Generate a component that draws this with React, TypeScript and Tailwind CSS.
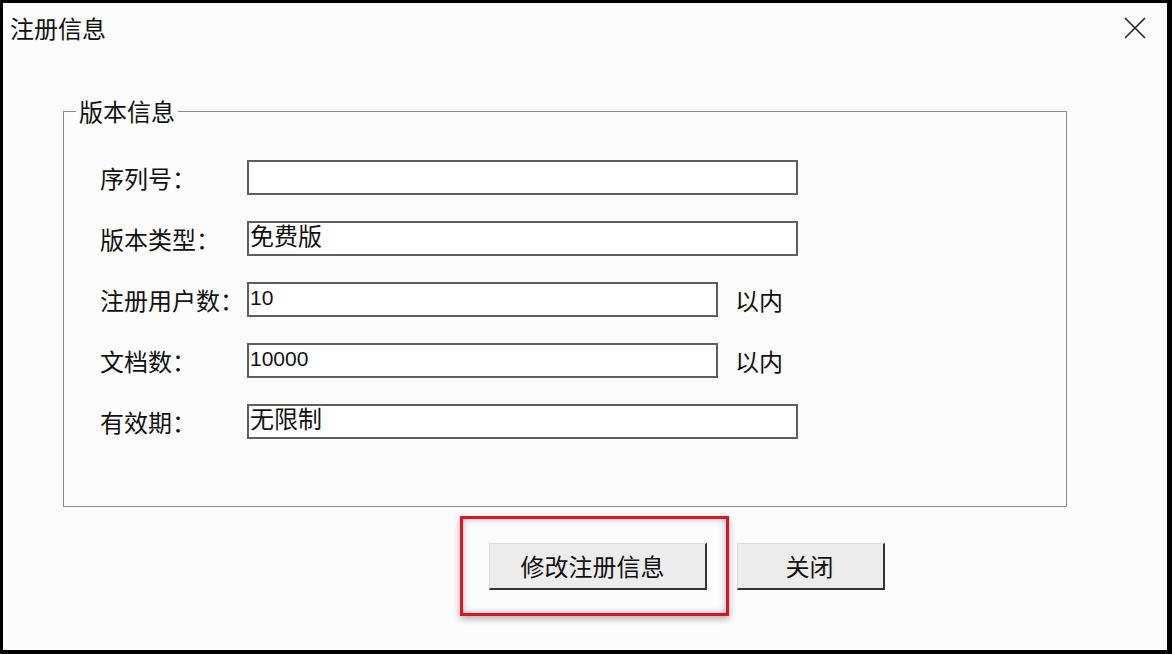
import React from 'react';

const rows = [
    { label: '序列号：', value: '', wide: true, digits: false },
    { label: '版本类型：', value: '免费版', wide: true, digits: false },
    { label: '注册用户数：', value: '10', wide: false, digits: true },
    { label: '文档数：', value: '10000', wide: false, digits: true },
    { label: '有效期：', value: '无限制', wide: true, digits: false },
];

export default function App() {
    return (
        <div className="w-[1172px] h-[654px] border-t-[3px] border-l-[3px] border-r-[5px] border-b-[4px] border-black bg-[#fcfcfc] text-[#111] font-['Noto_Sans_CJK_SC',sans-serif] overflow-hidden">
            <div className="flex items-center justify-between h-[50px] pl-[7px] pr-[21px]">
                <span className="text-[24px] leading-[28px]">注册信息</span>
                <svg width="22" height="22" viewBox="0 0 22 22" className="text-[#222]">
                    <path d="M1 1 L21 21 M21 1 L1 21" stroke="currentColor" strokeWidth="1.6" fill="none" />
                </svg>
            </div>

            <fieldset className="ml-[60px] mt-[45px] w-[1004px] h-[409px] border border-[#8a8a8a] pl-[36px] pt-[36px]">
                <legend className="-ml-[24px] px-[3px] text-[24px] leading-[26px]">版本信息</legend>
                <div className="flex flex-col gap-[26px]">
                    {rows.map((r) => (
                        <div key={r.label} className="flex items-center h-[35px]">
                            <span className="w-[147px] text-[24px] leading-[28px]">{r.label}</span>
                            <input
                                readOnly
                                value={r.value}
                                className={
                                    (r.wide ? 'w-[551px] ' : 'w-[471px] ') +
                                    (r.digits ? 'text-[21px] ' : 'text-[24px] ') +
                                    "h-[35px] bg-white border-2 border-[#5e5e5e] pl-[1px] pb-[3px] font-['Liberation_Sans','Noto_Sans_CJK_SC',sans-serif] outline-none"
                                }
                            />
                            {!r.wide && <span className="ml-[17px] text-[24px] leading-[28px]">以内</span>}
                        </div>
                    ))}
                </div>
            </fieldset>

            <div className="flex items-start ml-[457px] mt-[9px]">
                <div className="border-[3px] border-[#e0141e] pl-[26px] pr-[19px] pt-[24px] pb-[23px] shadow-[0_3px_7px_rgba(0,0,0,0.3),inset_0_0_7px_rgba(70,80,140,0.4)]">
                    <button className="w-[218px] h-[47px] pr-[10px] bg-[#ececec] border-t border-l border-t-[#dcdcdc] border-l-[#dcdcdc] border-r-2 border-b-2 border-r-[#333] border-b-[#333] text-[24px] leading-[28px]">
                        修改注册信息
                    </button>
                </div>
                <button className="ml-[8px] mt-[27px] w-[148px] h-[47px] pr-[2px] bg-[#ececec] border-t border-l border-t-[#dcdcdc] border-l-[#dcdcdc] border-r-2 border-b-2 border-r-[#333] border-b-[#333] text-[24px] leading-[28px]">
                    关闭
                </button>
            </div>
        </div>
    );
}
